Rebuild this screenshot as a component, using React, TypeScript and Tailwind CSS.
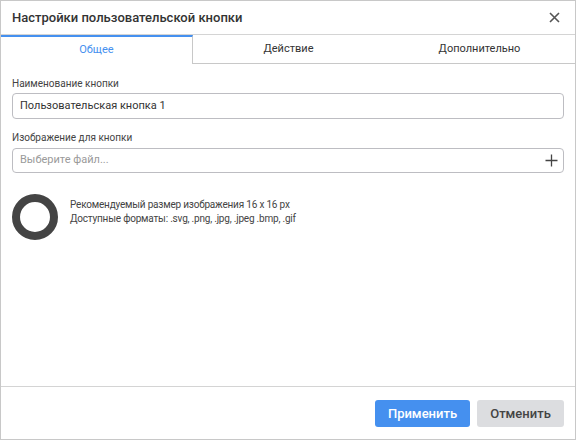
import React from "react";

const font = { fontFamily: "Roboto, 'Noto Sans', sans-serif" };

function Tab({ label, active }: { label: string; active?: boolean }) {
  if (active) {
    return (
      <div className="flex-1 flex items-center justify-center border-t-2 border-t-[#4590ef] border-r border-r-[#c8c8c8] text-[11px] text-[#4590ef]">
        {label}
      </div>
    );
  }
  return (
    <div className="flex-1 flex items-center justify-center border-b border-b-[#c8c8c8] text-[11px] text-[#333]">
      {label}
    </div>
  );
}

export default function App() {
  return (
    <div
      style={font}
      className="w-[576px] h-[440px] bg-white border border-[#c8c8c8] flex flex-col text-[#333]"
    >
      {/* header */}
      <div className="h-[34px] shrink-0 flex items-center justify-between pl-[11px] pr-[15px] border-b border-[#d4d4d4]">
        <span className="text-[13px] font-medium text-[#333]">Настройки пользовательской кнопки</span>
        <svg width="11" height="11" viewBox="0 0 11 11" className="text-[#555]">
          <path d="M1 1 L10 10 M10 1 L1 10" stroke="currentColor" strokeWidth="1.6" />
        </svg>
      </div>

      {/* tabs */}
      <div className="h-[29px] shrink-0 flex">
        <Tab label="Общее" active />
        <Tab label="Действие" />
        <Tab label="Дополнительно" />
      </div>

      {/* body */}
      <div className="flex-1 flex flex-col px-[11px] pt-[13px]">
        <label className="text-[10px] leading-[13px] text-[#444]">Наименование кнопки</label>
        <div className="mt-[3px] h-[26px] flex items-center border border-[#bdbdc2] rounded-[4px] px-[7px] text-[11px] text-[#333]">
          Пользовательская кнопка 1
        </div>

        <label className="mt-[12px] text-[10px] leading-[13px] text-[#444]">Изображение для кнопки</label>
        <div className="mt-[4px] h-[25px] flex items-center justify-between border border-[#bdbdc2] rounded-[4px] pl-[7px] pr-[5px] text-[11px] text-[#9a9a9a]">
          <span>Выберите файл...</span>
          <svg width="13" height="13" viewBox="0 0 13 13" className="text-[#444]">
            <path d="M6.5 0.5 V12.5 M0.5 6.5 H12.5" stroke="currentColor" strokeWidth="1.3" />
          </svg>
        </div>

        <div className="mt-[21px] flex items-center gap-[12px]">
          <div className="w-[46px] h-[46px] rounded-full border-[8px] border-[#444] shrink-0" />
          <div className="text-[10px] tracking-[-0.2px] leading-[14px] text-[#444] -mt-[10px]">
            <div>Рекомендуемый размер изображения 16 x 16 px</div>
            <div>Доступные форматы: .svg, .png, .jpg, .jpeg .bmp, .gif</div>
          </div>
        </div>
      </div>

      {/* footer */}
      <div className="h-[53px] shrink-0 border-t border-[#d4d4d4] flex items-start justify-end gap-[7px] pt-[13px] pr-[11px]">
        <button className="h-[27px] w-[95px] rounded-[3px] bg-[#4590ef] text-white text-[13px] font-medium">
          Применить
        </button>
        <button className="h-[27px] w-[87px] rounded-[3px] bg-[#dcdde0] text-[#444] text-[13px] font-medium">
          Отменить
        </button>
      </div>
    </div>
  );
}
